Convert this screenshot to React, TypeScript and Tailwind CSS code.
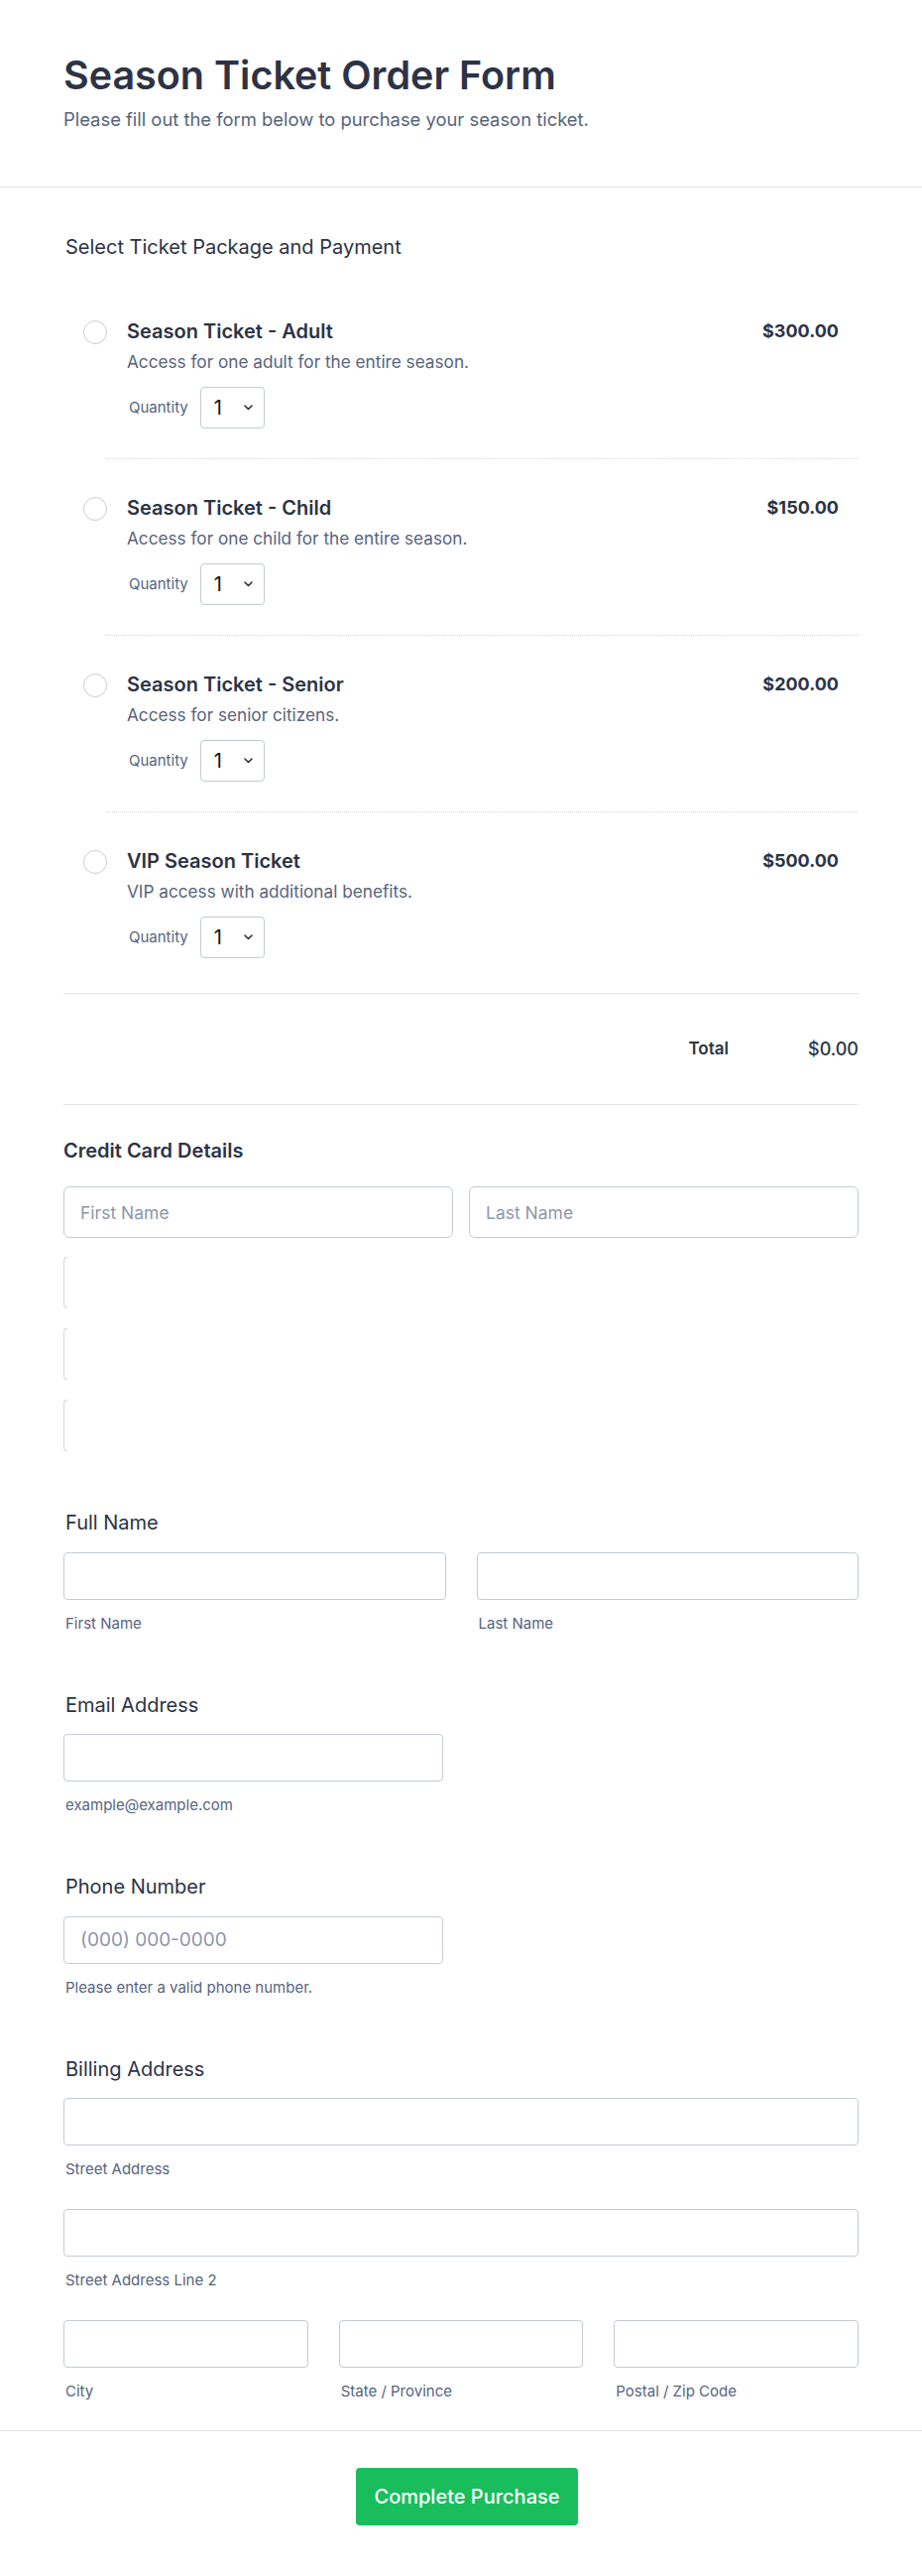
const tickets = [
  { name: "Season Ticket - Adult", desc: "Access for one adult for the entire season.", price: "$300.00" },
  { name: "Season Ticket - Child", desc: "Access for one child for the entire season.", price: "$150.00" },
  { name: "Season Ticket - Senior", desc: "Access for senior citizens.", price: "$200.00" },
  { name: "VIP Season Ticket", desc: "VIP access with additional benefits.", price: "$500.00" },
];

const inputCls =
  "h-12 w-full rounded-[4px] border border-[#c3cad8] bg-white px-4 text-[19px] text-[#2c3345] outline-none placeholder:text-[#8f96a8]";

function Field({ sub, placeholder, width }: { sub: string; placeholder?: string; width?: string }) {
  return (
    <div className={width}>
      <input className={inputCls} placeholder={placeholder} />
      <p className="mt-[14px] ml-[2px] text-[15px] leading-5 text-[#57647e]">{sub}</p>
    </div>
  );
}

function QuantitySelect() {
  return (
    <div className="flex h-[42px] w-[65px] items-center rounded-[4px] border border-[#c3cad8] bg-white pl-[13px] pr-[11px]">
      <span className="text-xl leading-none text-[#111111]">1</span>
      <svg className="ml-auto" width="9" height="6" viewBox="0 0 9 6" fill="none">
        <path d="M1 1l3.5 3.5L8 1" stroke="#2c3345" strokeWidth="1.6" strokeLinecap="round" strokeLinejoin="round" />
      </svg>
    </div>
  );
}

export default function App() {
  return (
    <div className="min-h-screen bg-white font-['Inter',sans-serif] text-[#2c3345]">
      {/* Header */}
      <header className="border-b border-[#e1e3eb] px-16 pt-[54px] pb-[54px]">
        <h1 className="text-[39.5px] leading-[44px] font-semibold">Season Ticket Order Form</h1>
        <p className="mt-2 text-[18.4px] leading-7 text-[#57647e]">
          Please fill out the form below to purchase your season ticket.
        </p>
      </header>

      <main className="px-16 pt-[46px] pb-[29px]">
        {/* Ticket packages */}
        <h2 className="ml-[2px] text-[20px] leading-7 font-normal">Select Ticket Package and Payment</h2>
        <div className="mt-[22px]">
          {tickets.map((t, i) => (
            <div key={t.name}>
              <div className={`flex px-5 pt-[35px] ${i === tickets.length - 1 ? "pb-[35px]" : "pb-[30px]"}`}>
                <span className="mt-[2.5px] h-6 w-6 shrink-0 rounded-full border-[1.5px] border-[#c8cdd9] bg-white" />
                <div className="ml-5 flex-1">
                  <div className="flex items-start justify-between">
                    <span className="text-[20px] leading-7 font-semibold">{t.name}</span>
                    <span className="text-[18px] leading-7 font-bold">{t.price}</span>
                  </div>
                  <p className="mt-[5px] text-[17.2px] leading-6 text-[#57647e]">{t.desc}</p>
                  <div className="mt-[13px] flex items-center gap-3">
                    <span className="ml-[2px] text-[15px] text-[#57647e]">Quantity</span>
                    <QuantitySelect />
                  </div>
                </div>
              </div>
              {i < tickets.length - 1 && <div className="ml-[43px] border-t border-dotted border-[#d3d7e0]" />}
            </div>
          ))}
        </div>

        {/* Total */}
        <div className="flex h-[113px] items-center justify-end border-y border-[#e3e5ec]">
          <span className="text-[17px] font-semibold">Total</span>
          <span className="ml-[80px] text-lg font-medium">$0.00</span>
        </div>

        {/* Credit card */}
        <div className="pt-[32px]">
          <h2 className="text-[20px] leading-7 font-semibold">Credit Card Details</h2>
          <div className="mt-[22px] grid grid-cols-2 gap-4">
            <input
              className="h-[52px] rounded-md border border-[#c3cad8] px-4 text-[17.5px] outline-none placeholder:text-[#8f96a8]"
              placeholder="First Name"
            />
            <input
              className="h-[52px] rounded-md border border-[#c3cad8] px-4 text-[17.5px] outline-none placeholder:text-[#8f96a8]"
              placeholder="Last Name"
            />
          </div>
          <div className="mt-[19px] flex flex-col gap-5">
            <div className="h-[52px] w-[4px] rounded-l-md border-y border-l border-[#d3d7e0]" />
            <div className="h-[52px] w-[4px] rounded-l-md border-y border-l border-[#d3d7e0]" />
            <div className="h-[52px] w-[4px] rounded-l-md border-y border-l border-[#d3d7e0]" />
          </div>
        </div>

        {/* Contact fields */}
        <div className="mt-[57px] flex flex-col gap-[57px]">
          <section>
            <h3 className="ml-[2px] text-[20px] leading-[30px] font-normal">Full Name</h3>
            <div className="mt-[14.5px] grid grid-cols-2 gap-[31px]">
              <Field sub="First Name" />
              <Field sub="Last Name" />
            </div>
          </section>

          <section>
            <h3 className="ml-[2px] text-[20px] leading-[30px] font-normal">Email Address</h3>
            <div className="mt-[14.5px]">
              <Field sub="example@example.com" width="w-[383px]" />
            </div>
          </section>

          <section>
            <h3 className="ml-[2px] text-[20px] leading-[30px] font-normal">Phone Number</h3>
            <div className="mt-[14.5px]">
              <Field sub="Please enter a valid phone number." placeholder="(000) 000-0000" width="w-[383px]" />
            </div>
          </section>

          <section>
            <h3 className="ml-[2px] text-[20px] leading-[30px] font-normal">Billing Address</h3>
            <div className="mt-[14.5px] flex flex-col gap-[30px]">
              <Field sub="Street Address" />
              <Field sub="Street Address Line 2" />
              <div className="grid grid-cols-3 gap-[31px]">
                <Field sub="City" />
                <Field sub="State / Province" />
                <Field sub="Postal / Zip Code" />
              </div>
            </div>
          </section>
        </div>
      </main>

      {/* Footer */}
      <footer className="flex justify-center border-t border-[#e3e5ec] pt-[37px] pb-[51px] pl-3">
        <button className="h-[58px] rounded-[4px] bg-[#1abd5c] px-[18px] text-[20px] font-medium text-white">
          Complete Purchase
        </button>
      </footer>
    </div>
  );
}
